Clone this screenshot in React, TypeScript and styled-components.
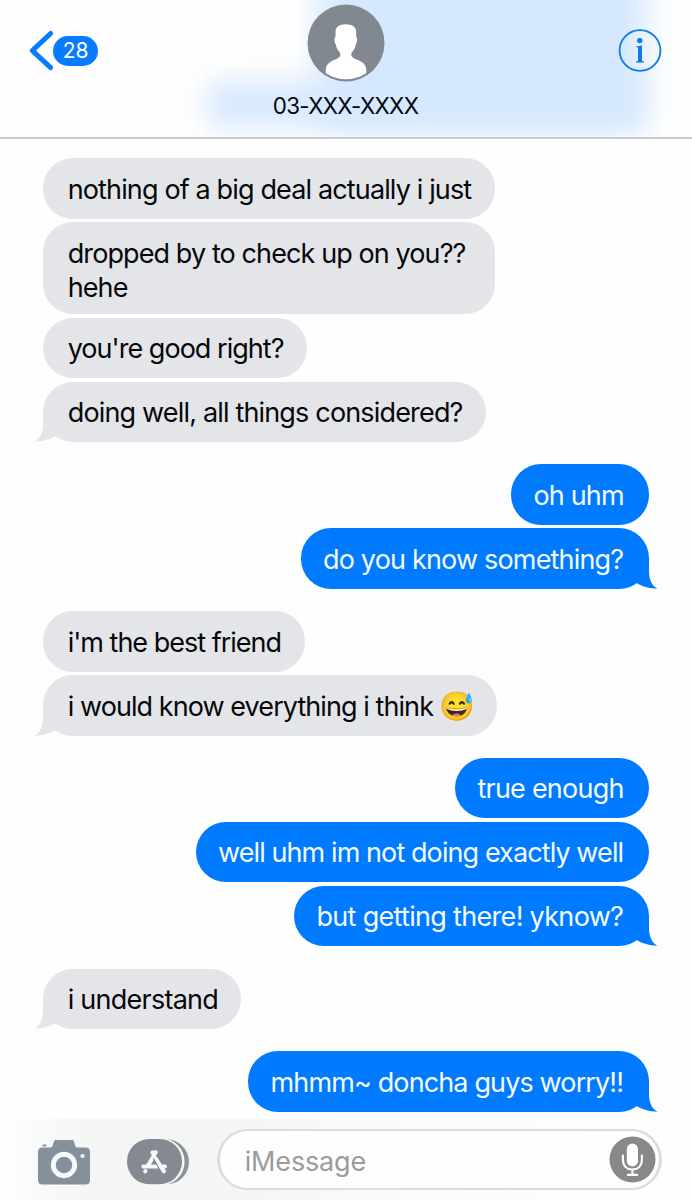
import React from 'react';
import styled, { createGlobalStyle } from 'styled-components';

const GlobalStyle = createGlobalStyle`
  *, *::before, *::after { box-sizing: border-box; }
  body {
    margin: 0;
    background: #fefefe;
    font-family: Inter, "Liberation Sans", sans-serif;
  }
`;

const BLUE = '#007aff';
const GREY = '#e4e5e9';

const Screen = styled.div`
  display: flex;
  flex-direction: column;
  width: 692px;
  height: 1200px;
  overflow: hidden;
  background: #fefefe;
`;

const Header = styled.header`
  position: relative;
  display: grid;
  grid-template-columns: 1fr auto 1fr;
  flex: none;
  height: 139px;
  padding: 0 30px 0 29px;
  border-bottom: 2px solid #c9cbcf;
  overflow: hidden;
  background: #fefefe;
`;

const Glow = styled.div<{ $x: number; $y: number; $w: number; $h: number; $blur: number }>`
  position: absolute;
  left: ${(p) => p.$x}px;
  top: ${(p) => p.$y}px;
  width: ${(p) => p.$w}px;
  height: ${(p) => p.$h}px;
  background: #d5e8fe;
  filter: blur(${(p) => p.$blur}px);
`;

const BackButton = styled.div`
  position: relative;
  display: flex;
  align-items: center;
  justify-self: start;
  height: 41px;
  margin: 30px 0 0 -1px;
`;

const CountBadge = styled.span`
  display: flex;
  align-items: center;
  justify-content: center;
  width: 45px;
  height: 30px;
  border-radius: 15px;
  background: #087bff;
  color: #fff;
  font-size: 21px;
  letter-spacing: -0.2px;
`;

const Contact = styled.div`
  position: relative;
  display: flex;
  flex-direction: column;
  align-items: center;
  padding-top: 4px;
`;

const ContactName = styled.div`
  margin-top: 9px;
  font-size: 22.4px;
  line-height: 30px;
  letter-spacing: -0.7px;
  color: #05080c;
  white-space: nowrap;
`;

const InfoButton = styled.div`
  position: relative;
  justify-self: end;
  height: 44px;
  margin-top: 28px;
`;

const Thread = styled.main`
  display: flex;
  flex-direction: column;
  flex: none;
  gap: 22.3px;
  height: 980px;
  padding: 19px 43px 0;
`;

const Group = styled.section<{ $mine: boolean }>`
  display: flex;
  flex-direction: column;
  align-items: ${(p) => (p.$mine ? 'flex-end' : 'flex-start')};
  gap: 3.5px;
`;

const Bubble = styled.div<{ $mine: boolean; $width: number; $tracking: number; $tall?: boolean }>`
  position: relative;
  width: ${(p) => p.$width}px;
  height: ${(p) => (p.$tall ? 92 : 60.5)}px;
  padding: ${(p) => (p.$tall ? 14.5 : 14.6)}px 0 0 ${(p) => (p.$mine ? 22.5 : 24.7)}px;
  border-radius: 30px;
  background: ${(p) => (p.$mine ? BLUE : GREY)};
  color: ${(p) => (p.$mine ? '#f4faff' : '#06080b')};
  font-size: 27px;
  line-height: 34.3px;
  letter-spacing: ${(p) => p.$tracking}px;
  white-space: pre;
`;

const TailSvg = styled.svg<{ $mine: boolean }>`
  position: absolute;
  bottom: 0;
  ${(p) => (p.$mine ? 'right: -9px; transform: scaleX(-1);' : 'left: -9px;')}
`;

const Emoji = styled.span`
  margin-left: -0.5px;
  font-size: 28.5px;
  line-height: 30px;
  letter-spacing: 0;
`;

const Composer = styled.footer`
  display: flex;
  align-items: flex-start;
  flex: none;
  height: 81px;
  padding: 10px 30px 0 37px;
  background: linear-gradient(90deg, #fefefe 0, #f8f9f9 45px, #f4f5f5 90px, #f4f6f6 240px, #fbfbfa 420px, #fdfdfb 560px, #fefefe 660px);
`;

const IconSlot = styled.div`
  width: 90px;
  padding-top: 10px;
`;

const Field = styled.div`
  display: flex;
  align-items: center;
  justify-content: space-between;
  width: 446px;
  height: 61px;
  padding: 0 3px 0 25px;
  border: 2.5px solid #dcdcdd;
  border-width: 2px 3px;
  border-radius: 31px;
  background: #fefefe;
`;

const Placeholder = styled.span`
  padding-top: 5px;
  font-size: 27px;
  line-height: 34px;
  letter-spacing: -0.15px;
  color: #9b9b9d;
`;

const Drawing = styled.svg`
  display: block;
  overflow: visible;
`;

const AvatarDrawing = styled(Drawing)`
  margin-left: 2px;
`;

const Tail = ({ mine }: { mine: boolean }) => (
  <TailSvg $mine={mine} width="32" height="32" viewBox="0 0 32 32">
    <path d="M9 1V14C9 22.5 6 29 0.5 31.7C8.5 31.5 16 29.2 21.5 26L31 12L20 1Z" fill={mine ? BLUE : GREY} />
  </TailSvg>
);

type Message = { text: string; width: number; tracking: number; emoji?: string; tall?: boolean };

const groups: { mine: boolean; messages: Message[] }[] = [
  {
    mine: false,
    messages: [
      { text: 'nothing of a big deal actually i just', width: 452, tracking: -0.86 },
      { text: 'dropped by to check up on you??\nhehe', width: 452, tracking: -0.9, tall: true },
      { text: "you're good right?", width: 264, tracking: -0.97 },
      { text: 'doing well, all things considered?', width: 443, tracking: -0.83 },
    ],
  },
  {
    mine: true,
    messages: [
      { text: 'oh uhm', width: 138, tracking: -0.85 },
      { text: 'do you know something?', width: 348.5, tracking: -0.82 },
    ],
  },
  {
    mine: false,
    messages: [
      { text: "i'm the best friend", width: 262, tracking: -1 },
      { text: 'i would know everything i think ', width: 454, tracking: -0.93, emoji: '😅' },
    ],
  },
  {
    mine: true,
    messages: [
      { text: 'true enough', width: 194, tracking: -0.78 },
      { text: 'well uhm im not doing exactly well', width: 453.5, tracking: -0.91 },
      { text: 'but getting there! yknow?', width: 355, tracking: -0.69 },
    ],
  },
  { mine: false, messages: [{ text: 'i understand', width: 198, tracking: -0.75 }] },
  { mine: true, messages: [{ text: 'mhmm~ doncha guys worry!!', width: 401, tracking: -0.87 }] },
];

const Avatar = () => (
  <AvatarDrawing width="78" height="78" viewBox="0 0 78 78">
    <defs>
      <clipPath id="avatar-clip">
        <circle cx="39" cy="38.2" r="37" />
      </clipPath>
    </defs>
    <circle cx="39" cy="39" r="38.5" fill="#81888f" />
    <path
      clipPath="url(#avatar-clip)"
      fill="#fff"
      d="M38.8 20.3C32 20.3 28.5 23 28.5 28.5V33C27 33.8 27.2 38.5 28.8 40.5C29.3 44 31 46.5 33 48.8C34.2 52.5 31.5 54.3 27 56C21.5 58.3 18.7 61.5 18.7 66.5V78H59.3V66.5C59.3 61.5 56.5 58.3 51 56C46.5 54.3 43.2 52.5 44.6 48.8C46.6 46.5 48.3 44 48.8 40.5C50.4 38.5 50.6 33.8 49.2 33V28.5C49.2 23 45.6 20.3 38.8 20.3Z"
    />
  </AvatarDrawing>
);

const Camera = () => (
  <Drawing width="54" height="46" viewBox="0 0 54 46">
    <path
      fill="#85909b"
      d="M5.5 8.5H13.5C15 8.3 15.5 7.5 16 5.5L17 2.5C17.4 1.4 18 1 19 1H35C36 1 36.6 1.4 37 2.5L38 6C38.6 8 39.2 8.5 41 8.5H48.5C51.5 8.5 53 10 53 13V41C53 44 51.5 45.6 48.5 45.6H5.5C2.5 45.6 1 44 1 41V13C1 10 2.5 8.5 5.5 8.5Z"
    />
    <rect x="5.5" y="5.5" width="4" height="2" rx="1" fill="#85909b" />
    <circle cx="27" cy="26" r="10.7" fill="none" stroke="#f7f8f8" strokeWidth="4.9" />
    <circle cx="45.5" cy="17" r="2.1" fill="#f7f8f8" />
  </Drawing>
);

const AppStore = () => (
  <Drawing width="63" height="46" viewBox="0 0 63 46">
    <rect x="8" y="0.3" width="54" height="45" rx="22.5" fill="#8a929c" />
    <rect x="2" y="-0.8" width="55.6" height="47.2" rx="23.6" fill="#f7f8f8" />
    <rect x="0" y="0" width="55" height="45.2" rx="22.4" fill="#858992" />
    <g stroke="#f7f8f8" strokeWidth="4" strokeLinecap="round" fill="none">
      <path d="M28.8 13.2L20.8 27" />
      <path d="M25.4 13.4L27 16" />
      <path d="M28.8 19.5L37 32.4" />
      <path d="M16.3 27.6H38" />
      <path d="M18.5 32L18.2 32.4" />
    </g>
    <path d="M26.4 19.4L32.3 30" stroke="#858992" strokeWidth="1.1" />
  </Drawing>
);

const Microphone = () => (
  <Drawing width="47" height="47" viewBox="0 0 47 47">
    <circle cx="23.5" cy="23.5" r="23" fill="#88888b" />
    <rect x="17.8" y="7.5" width="11.2" height="23" rx="5.6" fill="#fff" />
    <g stroke="#fff" strokeWidth="2.1" strokeLinecap="round" fill="none">
      <path d="M13.9 19.5V23.5C13.9 30 18 33.5 23.4 33.5C28.8 33.5 32.9 30 32.9 23.5V19.5" />
      <path d="M23.4 33.5V38.7M18.8 38.9H28.2" />
    </g>
  </Drawing>
);

export default function App() {
  return (
    <>
      <GlobalStyle />
      <Screen>
        <Header>
          <Glow $x={318} $y={-40} $w={328} $h={168} $blur={15} />
          <Glow $x={208} $y={82} $w={428} $h={44} $blur={14} />
          <BackButton>
            <Drawing width="25" height="41" viewBox="0 0 25 41">
              <path d="M22.6 3.5L4.3 20.6L22.6 37.7" fill="none" stroke="#087bff" strokeWidth="5" strokeLinecap="round" strokeLinejoin="round" />
            </Drawing>
            <CountBadge>28</CountBadge>
          </BackButton>
          <Contact>
            <Avatar />
            <ContactName>03-XXX-XXXX</ContactName>
          </Contact>
          <InfoButton>
            <Drawing width="44" height="44" viewBox="0 0 44 44">
              <circle cx="22" cy="22.5" r="20.4" fill="none" stroke="#0a7aec" strokeWidth="1.8" />
              <circle cx="21.8" cy="12.6" r="2.7" fill="#0a7aec" />
              <path d="M18.3 18.3C20.3 18.3 22 18 24 17.5V32C24 33 24.6 33.3 26 33.5V34.4H18V33.5C19.5 33.3 20 33 20 32V20.4C20 19.5 19.5 19.3 18.3 19.3Z" fill="#0a7aec" />
            </Drawing>
          </InfoButton>
        </Header>
        <Thread>
          {groups.map((group, g) => (
            <Group key={g} $mine={group.mine}>
              {group.messages.map((m, i) => (
                <Bubble key={m.text} $mine={group.mine} $width={m.width} $tracking={m.tracking} $tall={m.tall}>
                  {m.text}
                  {m.emoji && <Emoji>{m.emoji}</Emoji>}
                  {i === group.messages.length - 1 && <Tail mine={group.mine} />}
                </Bubble>
              ))}
            </Group>
          ))}
        </Thread>
        <Composer>
          <IconSlot>
            <Camera />
          </IconSlot>
          <IconSlot>
            <AppStore />
          </IconSlot>
          <Field>
            <Placeholder>iMessage</Placeholder>
            <Microphone />
          </Field>
        </Composer>
      </Screen>
    </>
  );
}
